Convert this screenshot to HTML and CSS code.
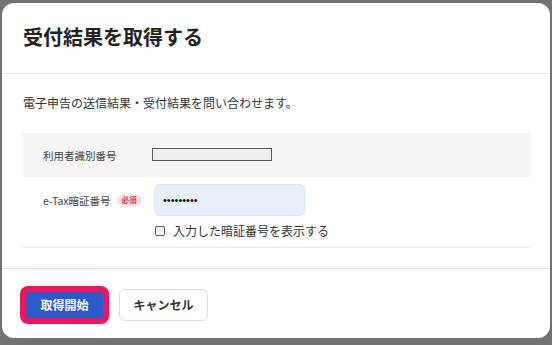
FILE: index.html
```html
<!DOCTYPE html>
<html lang="ja">
<head>
<meta charset="utf-8">
<title>受付結果を取得する</title>
<link rel="stylesheet" href="styles.css">
</head>
<body>
<div class="modal">
  <div class="modal-header">
    <h1 class="modal-title">受付結果を取得する</h1>
  </div>
  <div class="modal-body">
    <p class="desc">電子申告の送信結果・受付結果を問い合わせます。</p>
    <div class="form">
      <div class="row row-gray">
        <div class="label-cell">利用者識別番号</div>
        <div class="value-cell">
          <input class="readonly-input" type="text" readonly>
        </div>
      </div>
      <div class="row row-pass">
        <div class="label-cell label-pass">
          <span>e-Tax暗証番号</span>
          <span class="badge">必須</span>
        </div>
        <div class="value-cell value-stack">
          <input class="pass-input" type="password" value="123456789">
          <label class="check-line">
            <span class="checkbox"></span>
            <span class="check-text">入力した暗証番号を表示する</span>
          </label>
        </div>
      </div>
    </div>
  </div>
  <div class="modal-footer">
    <button class="btn btn-primary" type="button">取得開始</button>
    <button class="btn btn-secondary" type="button">キャンセル</button>
  </div>
</div>
</body>
</html>
```
FILE: styles.css
```css
* { box-sizing: border-box; }
html, body {
  margin: 0;
  padding: 0;
  height: 100%;
}
body {
  background: #727272;
  font-family: "Noto Sans CJK JP", "Noto Sans", sans-serif;
  color: #333;
  overflow: hidden;
}
.modal {
  margin: 3px 2px 0 2px;
  width: 548px;
  background: #fff;
  border-radius: 12px;
  display: flex;
  flex-direction: column;
}
.modal-header {
  height: 71px;
  display: flex;
  align-items: center;
  padding: 0 21px;
  border-bottom: 1px solid #e4e4e4;
}
.modal-title {
  margin: 0;
  font-size: 20px;
  font-weight: 700;
  color: #222;
  line-height: 24px;
  margin-top: -2px;
}
.modal-body {
  padding: 0 20px 0 21px;
}
.desc {
  margin: 20px 0 21px;
  font-size: 12px;
  line-height: 18px;
  color: #333;
}
.form {
  display: flex;
  flex-direction: column;
}
.row {
  display: flex;
}
.row-gray {
  height: 44px;
  align-items: center;
  background: #f6f4f4;
}
.label-cell {
  width: 129px;
  padding-left: 20px;
  font-size: 10.5px;
  color: #444;
  flex-shrink: 0;
}
.readonly-input {
  display: block;
  width: 120px;
  height: 13px;
  margin: -2px 0 0 0;
  padding: 0;
  border: 1px solid #5a5a5a;
  background: #efefef;
  outline: none;
}
.row-pass {
  padding: 7px 0 9px;
  border-bottom: 1px solid #e8e8e8;
  align-items: flex-start;
}
.label-pass {
  width: 131px;
  height: 32px;
  display: flex;
  align-items: center;
  gap: 6px;
}
.badge {
  display: inline-flex;
  align-items: center;
  justify-content: center;
  width: 25px;
  height: 11px;
  border-radius: 6px;
  background: #fbdde2;
  color: #e0344f;
  font-size: 7.5px;
  font-weight: 700;
  line-height: 1;
}
.value-stack {
  display: flex;
  flex-direction: column;
}
.pass-input {
  display: block;
  width: 151px;
  height: 32px;
  margin: 0;
  padding: 0 0 0 8px;
  border: 1px solid #dbe4f3;
  border-radius: 6px;
  background: #e8f0fe;
  font-family: "Liberation Sans", sans-serif;
  font-size: 11px;
  color: #111;
  outline: none;
}
.check-line {
  display: flex;
  align-items: center;
  margin-top: 8px;
  height: 14px;
  padding-left: 1px;
}
.checkbox {
  width: 10px;
  height: 10px;
  border: 1px solid #555;
  border-radius: 2px;
  background: #fff;
  flex-shrink: 0;
}
.check-text {
  margin-left: 8px;
  font-size: 12px;
  line-height: 14px;
  color: #333;
}
.modal-footer {
  margin-top: 20px;
  border-top: 1px solid #e4e4e4;
  padding: 20px 21px 17px;
  display: flex;
  gap: 13px;
}
.btn {
  height: 32px;
  margin: 0;
  padding: 0;
  font-family: "Noto Sans CJK JP", sans-serif;
  font-size: 12px;
  font-weight: 700;
  border-radius: 6px;
  cursor: pointer;
  line-height: 1;
}
.btn-primary {
  width: 83px;
  background: #2b5bc9;
  color: #fff;
  border: 3px solid #f0135d;
  box-shadow: 0 0 0 3px #f0135d;
  border-radius: 5px;
}
.btn-secondary {
  width: 89px;
  background: #fff;
  color: #333;
  border: 1px solid #dcdcdc;
}
```
